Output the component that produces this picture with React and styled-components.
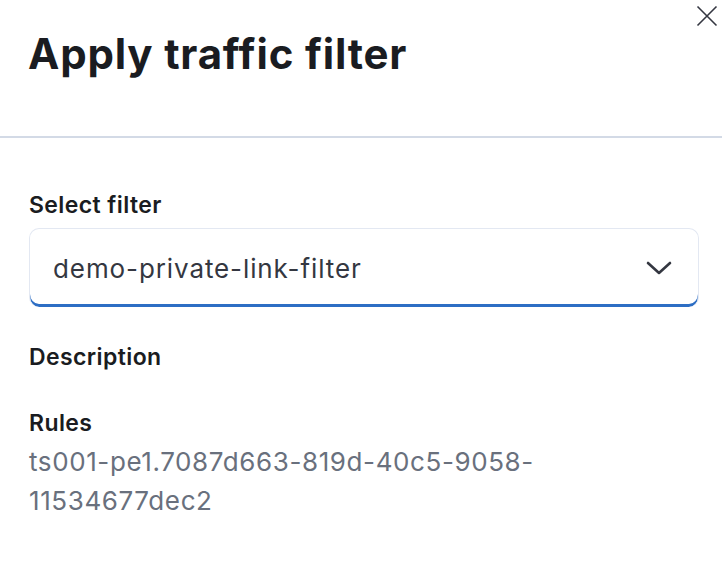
import React from 'react'
import styled, { createGlobalStyle } from 'styled-components'

const GlobalStyle = createGlobalStyle`
  html, body {
    margin: 0;
    padding: 0;
    background: #ffffff;
  }
  body {
    font-family: Inter, "Noto Sans", sans-serif;
    color: #1a1c21;
  }
`

const Flyout = styled.div`
  position: relative;
  width: 722px;
  height: 581px;
  background: #ffffff;
  overflow: hidden;
`

const CloseButton = styled.button`
  position: absolute;
  top: 4px;
  right: 3px;
  width: 24px;
  height: 24px;
  padding: 0;
  border: none;
  background: transparent;
  color: #343741;
  display: flex;
  align-items: center;
  justify-content: center;
`

const Header = styled.div`
  padding: 29px 28px 0;
  height: 107px;
  border-bottom: 2px solid #d3dae6;
`

const Title = styled.h2`
  margin: 0;
  font-size: 42px;
  line-height: 50px;
  font-weight: 700;
  letter-spacing: 0.8px;
  color: #1a1c21;
`

const Body = styled.div`
  padding: 52px 23px 0 29px;
  display: flex;
  flex-direction: column;
`

const Label = styled.div`
  font-size: 23px;
  line-height: 30px;
  font-weight: 600;
  letter-spacing: 0.4px;
  color: #1a1c21;
  margin-bottom: ${p => p.$gap || 0}px;
`

const Select = styled.div`
  box-sizing: border-box;
  height: 79px;
  display: flex;
  align-items: center;
  justify-content: space-between;
  padding: 0 26px 0 23px;
  border: 1.5px solid #e3e8f2;
  border-bottom: none;
  border-radius: 10px;
  box-shadow: inset 0 -3px 0 #2d6ec4;
  background: #ffffff;
  margin-bottom: 35px;
`

const SelectValue = styled.span`
  font-size: 26px;
  letter-spacing: 0.9px;
  color: #343741;
`

const Group = styled.div`
  margin-bottom: ${p => p.$gap || 0}px;
`

const RuleText = styled.div`
  margin-top: 4px;
  font-size: 26px;
  line-height: 39px;
  letter-spacing: 0.6px;
  color: #69707d;
`

export default function App() {
  return (
    <>
      <GlobalStyle />
      <Flyout>
        <CloseButton aria-label="Close">
          <svg width="22" height="22" viewBox="0 0 22 22" fill="none">
            <path d="M1.5 1.5L20.5 20.5M20.5 1.5L1.5 20.5" stroke="currentColor" strokeWidth="1.6" />
          </svg>
        </CloseButton>
        <Header>
          <Title>Apply traffic filter</Title>
        </Header>
        <Body>
          <Label $gap={8}>Select filter</Label>
          <Select>
            <SelectValue>demo-private-link-filter</SelectValue>
            <svg width="26" height="14" viewBox="0 0 26 14" fill="none">
              <path d="M2 2L13 12L24 2" stroke="#343741" strokeWidth="2.6" strokeLinecap="round" strokeLinejoin="round" />
            </svg>
          </Select>
          <Group $gap={36}>
            <Label>Description</Label>
          </Group>
          <Group>
            <Label>Rules</Label>
            <RuleText>ts001-pe1.7087d663-819d-40c5-9058-<br />11534677dec2</RuleText>
          </Group>
        </Body>
      </Flyout>
    </>
  )
}
